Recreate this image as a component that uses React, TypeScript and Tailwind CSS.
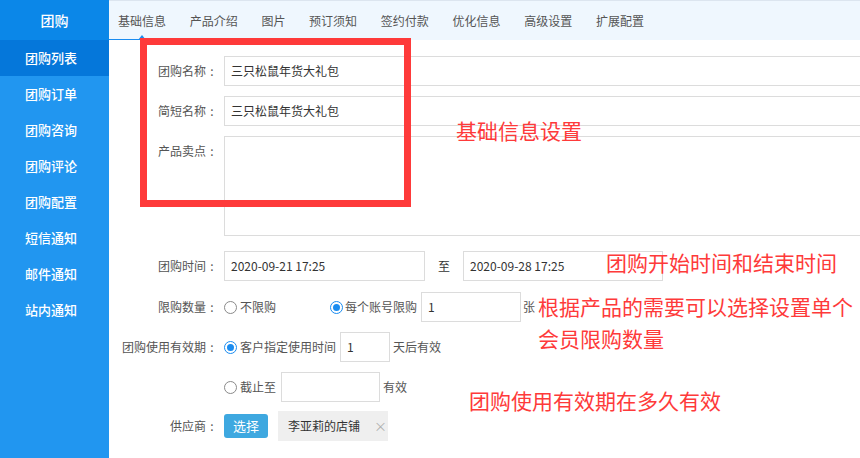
import type { ReactNode } from "react";

const menu = ["团购列表", "团购订单", "团购咨询", "团购评论", "团购配置", "短信通知", "邮件通知", "站内通知"];
const tabs = ["基础信息", "产品介绍", "图片", "预订须知", "签约付款", "优化信息", "高级设置", "扩展配置"];

function Radio({ checked }: { checked?: boolean }) {
  return checked ? (
    <span className="w-[13px] h-[13px] rounded-full border border-[#1a8cf0] flex items-center justify-center shrink-0">
      <span className="w-[7px] h-[7px] rounded-full bg-[#1a8cf0]" />
    </span>
  ) : (
    <span className="w-[13px] h-[13px] rounded-full border border-[#8a8a8a] shrink-0" />
  );
}

function Row({ label, children, className = "" }: { label: string; children: ReactNode; className?: string }) {
  return (
    <div className={`flex items-start gap-[6px] ${className}`}>
      <div className="w-[109px] shrink-0 text-right h-[30px] leading-[30px] text-[#555]">
        {label}
        {label && <span className="inline-block w-3 text-center">:</span>}
      </div>
      <div className="flex items-center min-h-[30px]">{children}</div>
    </div>
  );
}

function Input({ value = "", className = "" }: { value?: string; className?: string }) {
  return (
    <div className={`h-[30px] border border-[#dcdcdc] bg-white px-[6px] leading-[28px] text-[#333] ${className}`}>
      {value}
    </div>
  );
}

export default function App() {
  return (
    <div className="relative flex w-[860px] h-[458px] overflow-hidden bg-white text-[12px] font-['Noto_Sans_CJK_SC','Microsoft_YaHei',sans-serif]">
      {/* sidebar */}
      <aside className="w-[109px] shrink-0 bg-[#2196f0] text-white">
        <div className="h-10 flex items-center justify-center bg-[#0b87e8] text-[14px] font-medium">团购</div>
        {menu.map((m, i) => (
          <div
            key={m}
            className={`h-9 flex items-center pl-[25px] text-[13px] font-medium ${i === 0 ? "bg-[#0577da]" : ""}`}
          >
            {m}
          </div>
        ))}
      </aside>

      <main className="flex-1 min-w-0 flex flex-col">
        {/* tabs */}
        <nav className="relative h-10 shrink-0 border-t border-[#dce5ef] bg-[#eff7fe] flex items-center pl-[9px] gap-[23.7px] text-[#555]">
          {tabs.map((t) => (
            <span key={t} className="whitespace-nowrap">{t}</span>
          ))}
          <span className="absolute left-0 bottom-0 w-[66px] h-px bg-[#1a8cf0]" />
          <span className="absolute left-[29px] bottom-0 w-0 h-0 border-x-[4px] border-x-transparent border-b-[5px] border-b-[#1a8cf0]" />
        </nav>

        {/* form */}
        <div className="pt-4 flex flex-col">
          <Row label="团购名称">
            <Input value="三只松鼠年货大礼包" className="w-[640px]" />
          </Row>
          <Row label="简短名称" className="mt-[10px]">
            <Input value="三只松鼠年货大礼包" className="w-[640px]" />
          </Row>
          <Row label="产品卖点" className="mt-[10px]">
            <div className="w-[640px] h-[100px] border border-[#dcdcdc]" />
          </Row>
          <Row label="团购时间" className="mt-[15px]">
            <Input value="2020-09-21 17:25" className="w-[201px]" />
            <span className="ml-[13px] mr-[13px] text-[#333]">至</span>
            <Input value="2020-09-28 17:25" className="w-[200px]" />
          </Row>
          <Row label="限购数量" className="mt-[11px]">
            <Radio />
            <span className="ml-[3px] text-[#555]">不限购</span>
            <span className="ml-[54px]" />
            <Radio checked />
            <span className="ml-[2px] text-[#555]">每个账号限购</span>
            <Input value="1" className="ml-[4px] w-[100px]" />
            <span className="ml-[2px] text-[#555]">张</span>
          </Row>
          <Row label="团购使用有效期" className="mt-[10px]">
            <Radio checked />
            <span className="ml-[3px] text-[#555]">客户指定使用时间</span>
            <Input value="1" className="ml-[4px] w-[50px]" />
            <span className="ml-[3px] text-[#555]">天后有效</span>
          </Row>
          <Row label="" className="mt-[10px]">
            <Radio />
            <span className="ml-[3px] text-[#555]">截止至</span>
            <Input className="ml-[5px] w-[99px]" />
            <span className="ml-[3px] text-[#555]">有效</span>
          </Row>
          <Row label="供应商" className="mt-[9px]">
            <button className="h-6 w-11 rounded-[3px] bg-[#3ea8e0] text-white text-[13px]">选择</button>
            <div className="ml-[10px] h-[30px] w-[110px] bg-[#efefef] flex items-center pl-[10px] text-[#333]">
              李亚莉的店铺
              <span className="ml-[14px] text-[#b0b0b0] text-[13px]">×</span>
            </div>
          </Row>
        </div>
      </main>

      {/* annotations */}
      <div className="absolute left-[140px] top-[38px] w-[271px] h-[169px] border-[7px] border-[#fe3a3a]" />
      <div className="absolute left-[456px] top-[118px] text-[21px] leading-[24px] text-[#fe3a3a]">基础信息设置</div>
      <div className="absolute left-[606px] top-[250px] text-[21px] leading-[24px] text-[#fe3a3a] whitespace-nowrap">团购开始时间和结束时间</div>
      <div className="absolute left-[538px] top-[290px] text-[21px] leading-[32px] text-[#fe3a3a] whitespace-nowrap">
        根据产品的需要可以选择设置单个
        <br />
        会员限购数量
      </div>
      <div className="absolute left-[469px] top-[388px] text-[21px] leading-[24px] text-[#fe3a3a] whitespace-nowrap">团购使用有效期在多久有效</div>
    </div>
  );
}
